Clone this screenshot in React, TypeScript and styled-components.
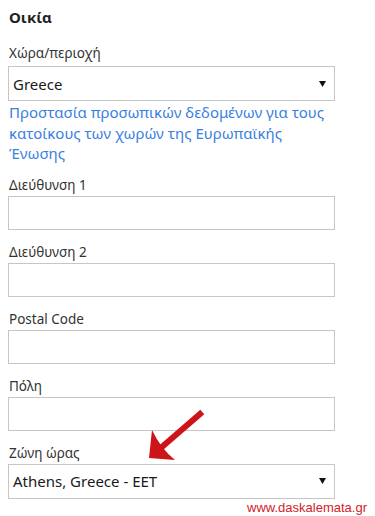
import React from "react";
import styled, { createGlobalStyle } from "styled-components";

const GlobalStyle = createGlobalStyle`
  html, body {
    margin: 0;
    padding: 0;
    background: #ffffff;
  }
  body {
    font-family: "Noto Sans", "Open Sans", sans-serif;
    color: #333333;
  }
`;

type Field = {
  label: string;
  kind: "input" | "select";
  value?: string;
};

const fields: Field[] = [
  { label: "Διεύθυνση 1", kind: "input" },
  { label: "Διεύθυνση 2", kind: "input" },
  { label: "Postal Code", kind: "input" },
  { label: "Πόλη", kind: "input" },
  { label: "Ζώνη ώρας", kind: "select", value: "Athens, Greece - EET" },
];

const Caret = () => (
  <svg width="7" height="6" viewBox="0 0 7 6">
    <path d="M0 0 H7 L3.5 6 Z" fill="#111" />
  </svg>
);

const SelectField = ({ value }: { value: string }) => (
  <SelectBox>
    <span>{value}</span>
    <Caret />
  </SelectBox>
);

export default function App() {
  return (
    <Page>
      <GlobalStyle />
      <Heading>Οικία</Heading>

      <Label>Χώρα/περιοχή</Label>
      <SelectField value="Greece" />
      <PrivacyLink href="#">
        Προστασία προσωπικών δεδομένων για τους κατοίκους των χωρών της
        Ευρωπαϊκής Ένωσης
      </PrivacyLink>

      <FieldList>
        {fields.map((f) => (
          <FieldGroup key={f.label}>
            <Label>{f.label}</Label>
            {f.kind === "select" ? (
              <SelectField value={f.value ?? ""} />
            ) : (
              <TextInput type="text" />
            )}
          </FieldGroup>
        ))}
      </FieldList>

      <Watermark>www.daskalemata.gr</Watermark>

      {/* red pointer drawn over the form */}
      <Arrow width="60" height="55" viewBox="0 0 60 55">
        <path d="M54 5 L17 37" stroke="#cc1419" strokeWidth="6" strokeLinecap="square" />
        <path d="M3 49 L6 21 Q15 40 29 51 Z" fill="#cc1419" />
      </Arrow>
    </Page>
  );
}

const Page = styled.div`
  position: relative;
  width: 375px;
  height: 516px;
  padding: 7px 40px 0 8px;
  box-sizing: border-box;
  overflow: hidden;
`;

const Heading = styled.h2`
  margin: 0 0 16px 1px;
  font-size: 15px;
  line-height: 20px;
  font-weight: 700;
  color: #222222;
`;

const Label = styled.div`
  margin: 0 0 3px 1px;
  font-size: 13.5px;
  line-height: 20px;
  color: #333333;
`;

const SelectBox = styled.div`
  display: flex;
  align-items: center;
  justify-content: space-between;
  height: 35px;
  padding: 0 8px 0 4px;
  box-sizing: border-box;
  border: 1px solid #c6c6c6;
  background: #ffffff;
  font-size: 15px;
  color: #1a1a1a;
`;

const PrivacyLink = styled.a`
  display: block;
  margin: 1px 0 0 1px;
  font-size: 15px;
  line-height: 20.5px;
  color: #3a7fdf;
  text-decoration: none;
`;

const FieldList = styled.div`
  display: flex;
  flex-direction: column;
  gap: 12px;
  margin-top: 11px;
`;

const FieldGroup = styled.div`
  display: flex;
  flex-direction: column;

  & ${Label} {
    margin-bottom: 1px;
  }
`;

const TextInput = styled.input`
  height: 34px;
  box-sizing: border-box;
  border: 1px solid #c6c6c6;
  background: #ffffff;
  margin: 0;
  padding: 0 5px;
  font-family: inherit;
  font-size: 15px;
  outline: none;
`;

const Watermark = styled.div`
  margin: 1px -32px 0 0;
  text-align: right;
  font-family: "Liberation Sans", Arial, sans-serif;
  font-size: 13px;
  line-height: 15px;
  color: #d2222a;
`;

const Arrow = styled.svg`
  position: absolute;
  left: 146px;
  top: 409px;
`;
